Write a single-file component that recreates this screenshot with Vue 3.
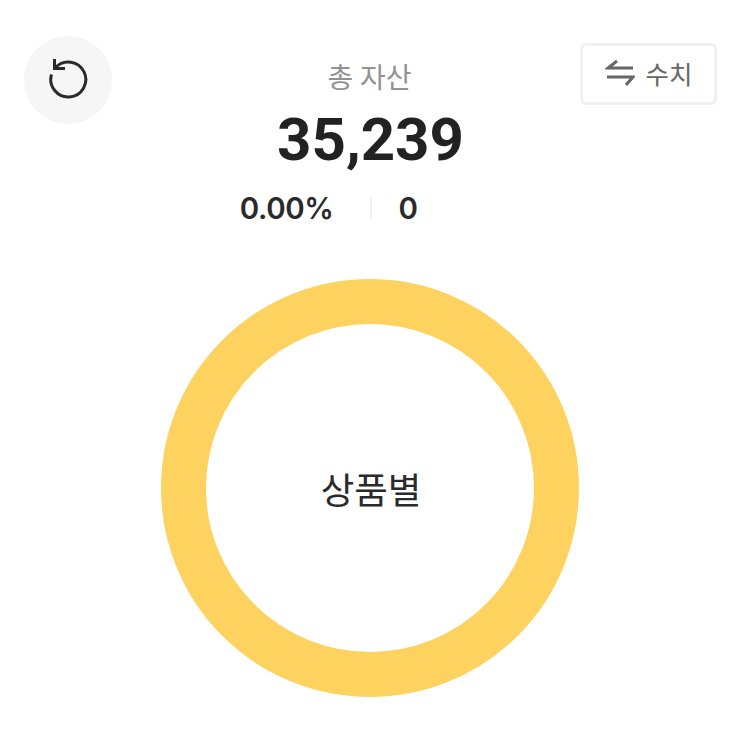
<script setup>
const stats = { rate: '0.00%', amount: '0' }
</script>

<template>
  <div class="page">
    <div class="top">
      <button class="refresh">
        <svg width="40" height="44" viewBox="0 0 40 44" fill="none" stroke="#2b2b2b" stroke-width="3">
          <path d="M3.5 16.5A17.5 17.5 0 1 0 7.5 9.5" />
          <path d="M6.5 1v9.5h10.5" />
        </svg>
      </button>

      <div class="summary">
        <div class="title">총 자산</div>
        <div class="total">35,239</div>
        <div class="stats">
          <span class="rate">{{ stats.rate }}</span>
          <i class="divider"></i>
          <span class="amount">{{ stats.amount }}</span>
        </div>
      </div>

      <button class="toggle">
        <svg width="30" height="30" viewBox="0 0 30 30" fill="none" stroke="#666" stroke-width="3">
          <path d="M28 10H3L12 3" />
          <path d="M2 19h26l-7 8" />
        </svg>
        <span>수치</span>
      </button>
    </div>

    <div class="chart">
      <div class="donut">
        <span>상품별</span>
      </div>
    </div>
  </div>
</template>

<style>
html, body {
  margin: 0;
  background: #fff;
}
</style>

<style scoped>
.page {
  width: 743px;
  height: 743px;
  overflow: hidden;
  font-family: Roboto, "Noto Sans CJK KR", sans-serif;
}

.top {
  display: grid;
  grid-template-columns: 1fr 360px 1fr;
  padding: 36px 26px 0 24px;
}

.refresh {
  width: 88px;
  height: 88px;
  border: none;
  border-radius: 50%;
  background: #f6f6f6;
  padding: 0;
  display: flex;
  align-items: center;
  justify-content: center;
}

.summary {
  text-align: center;
  padding-top: 25px;
}

.title {
  margin-left: -2px;
  font-size: 28px;
  line-height: 36px;
  color: #929292;
}

.total {
  margin-top: 7px;
  font-size: 60px;
  line-height: 72px;
  font-weight: 700;
  color: #222;
}

.stats {
  margin-top: 14px;
  display: grid;
  grid-template-columns: 1fr 2px 1fr;
  align-items: center;
  font-family: Inter, sans-serif;
  font-size: 29.5px;
  line-height: 36px;
  font-weight: 600;
  letter-spacing: -.4px;
  color: #2a2a2a;
}

.rate {
  text-align: right;
  padding-right: 36px;
}

.amount {
  text-align: left;
  padding-left: 27px;
}

.divider {
  height: 22px;
  background: #f1f1f1;
}

.toggle {
  justify-self: end;
  width: 137px;
  height: 62px;
  margin-top: 7px;
  box-sizing: border-box;
  border: 3px solid #f0f0f0;
  border-radius: 6px;
  background: #fff;
  padding: 0 0 2px;
  display: flex;
  align-items: center;
  justify-content: center;
  gap: 11px;
  font-family: inherit;
  font-size: 25.5px;
  color: #666;
}

.toggle span {
  margin-bottom: 2px;
}

.chart {
  margin-top: 53px;
  display: flex;
  justify-content: center;
  padding-right: 3px;
}

.donut {
  width: 418px;
  height: 418px;
  box-sizing: border-box;
  border: 45px solid #fdd25f;
  border-radius: 50%;
  display: flex;
  align-items: center;
  justify-content: center;
  font-size: 36.5px;
  color: #2a2a2a;
}

.donut span {
  margin-left: 2px;
}
</style>
